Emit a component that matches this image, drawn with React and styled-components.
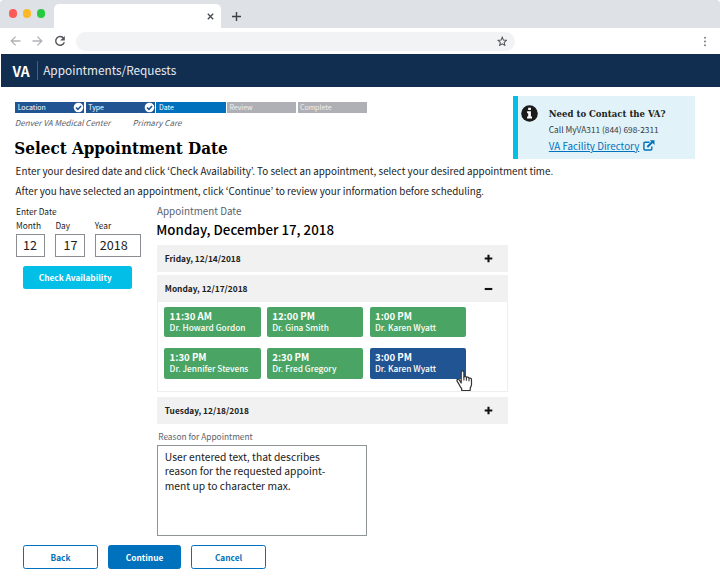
import React from 'react';
import styled, { createGlobalStyle } from 'styled-components';

const GlobalStyle = createGlobalStyle`
  *, *::before, *::after { box-sizing: border-box; }
  body {
    margin: 0;
    background: #fff;
    color: #323a45;
    font-family: "Noto Sans CJK JP", "Noto Sans", sans-serif;
    font-feature-settings: "pwid";
    overflow: hidden;
  }
`;

const serif = '"DejaVu Serif Condensed", "DejaVu Serif", serif';

const Window = styled.div`
  width: 720px;
  height: 576px;
  display: flex;
  flex-direction: column;
  overflow: hidden;
`;

/* Browser chrome */
const TabStrip = styled.div`
  height: 28px;
  flex: none;
  display: flex;
  align-items: flex-end;
  background: #dee1e6;
  border-radius: 4px 4px 0 0;
`;
const Lights = styled.div`
  width: 54px;
  height: 28px;
  display: flex;
  align-items: center;
  gap: 5.4px;
  padding: 0 0 1px 9px;
`;
const Light = styled.span`
  width: 8.4px;
  height: 8.4px;
  border-radius: 50%;
  background: ${(p) => p.$color};
`;
const Tab = styled.div`
  width: 167px;
  height: 24px;
  display: flex;
  align-items: center;
  justify-content: flex-end;
  padding: 0 7.5px 0 0;
  background: #fff;
  border-radius: 5px 5px 0 0;
`;
const NewTab = styled.div`
  height: 24px;
  display: flex;
  align-items: center;
  padding-left: 11px;
`;
const Toolbar = styled.div`
  height: 26px;
  flex: none;
  display: flex;
  align-items: center;
  padding: 0 12px 0 9.5px;
  background: #fff;
`;
const NavIcons = styled.div`
  display: flex;
  align-items: center;
  gap: 11.3px;
  width: 66px;
`;
const Address = styled.div`
  width: 439px;
  height: 19px;
  display: flex;
  align-items: center;
  justify-content: flex-end;
  padding-right: 7.5px;
  background: #f1f3f4;
  border-radius: 10px;
`;
const MenuDots = styled.div`
  margin-left: auto;
  display: flex;
`;

/* Application header */
const AppBar = styled.header`
  height: 33px;
  flex: none;
  margin-left: 1px;
  display: flex;
  align-items: center;
  padding-left: 11.5px;
  background: #112e51;
  color: #fff;
`;
const Brand = styled.span`
  width: 24px;
  font-size: 13.9px;
  font-weight: 700;
  line-height: 20px;
`;
const AppTitle = styled.span`
  height: 19px;
  padding-left: 5.7px;
  border-left: 1px solid #48607c;
  color: #e8ebef;
  font-size: 11.8px;
  line-height: 18px;
`;

/* Page heading area */
const Top = styled.section`
  height: 73.7px;
  flex: none;
  display: flex;
  justify-content: space-between;
  padding: 9px 25px 0 15.3px;
`;
const Heading = styled.div`
  display: flex;
  flex-direction: column;
  padding-top: 5.7px;
`;
const Steps = styled.ol`
  display: flex;
  gap: 1.5px;
  margin: 0;
  padding: 0;
  list-style: none;
`;
const Step = styled.li`
  width: 69.1px;
  height: 11px;
  display: flex;
  align-items: center;
  justify-content: space-between;
  padding: 0 0 0 2.4px;
  background: ${(p) => ({ done: '#205493', current: '#0071bc', todo: '#aeb0b5' }[p.$state])};
  color: ${(p) => (p.$state === 'todo' ? '#f1f1f1' : '#fff')};
  font-size: 6.95px;
  line-height: 11px;
`;
const Choices = styled.div`
  display: grid;
  grid-template-columns: 117.7px auto;
  margin: 3.6px 0 0 -0.5px;
  color: #5b616b;
  font-size: 8.05px;
  font-style: italic;
  line-height: 14px;
`;
const Title = styled.h1`
  margin: 6px 0 0 -1px;
  color: #000;
  font: 700 16.9px/24px ${serif};
  white-space: nowrap;
`;
const Contact = styled.aside`
  width: 182px;
  height: 63px;
  display: flex;
  align-items: flex-start;
  background: #e1f3f8;
  border-left: 5px solid #02bfe7;
`;
const InfoIcon = styled.svg`
  flex: none;
  margin: 9px 10.5px 0 3.3px;
`;
const ContactBody = styled.div`
  display: flex;
  flex-direction: column;
  padding-top: 8.8px;
  white-space: nowrap;
`;
const ContactTitle = styled.h2`
  margin: 0;
  color: #212121;
  font: 700 9.5px/17px ${serif};
`;
const Phone = styled.span`
  color: #323a45;
  font-size: 8.35px;
  line-height: 15.5px;
`;
const DirectoryLink = styled.a`
  display: flex;
  align-items: center;
  gap: 4px;
  margin-top: 0.6px;
  color: #0071bc;
  font-size: 9.8px;
  line-height: 16px;
  text-decoration: none;
`;
const LinkText = styled.span`
  text-decoration: underline;
  text-underline-offset: 1px;
  text-decoration-thickness: 1px;
`;

const Intro = styled.section`
  padding-left: 15.6px;
`;
const Paragraph = styled.p`
  margin: 0;
  color: #212121;
  font-size: 9.84px;
  line-height: 20px;
  white-space: nowrap;
`;

/* Form */
const Columns = styled.main`
  display: grid;
  grid-template-columns: 141px 351px;
  padding: 3px 0 0 16px;
`;
const DateForm = styled.form`
  padding-top: 0.2px;
`;
const Legend = styled.div`
  color: #212121;
  font-size: 8.3px;
  line-height: 14px;
`;
const Fields = styled.div`
  display: flex;
  gap: 10px;
`;
const Field = styled.label`
  width: ${(p) => p.$width}px;
  color: #212121;
  font-size: 8.3px;
  line-height: 14px;
`;
const FieldBox = styled.div`
  height: 23px;
  margin-top: 2px;
  padding-left: ${(p) => p.$inset}px;
  border: 1px solid #8a8d92;
  font-size: 12.6px;
  line-height: 20.5px;
`;
const CheckButton = styled.button`
  width: 109px;
  height: 23px;
  display: block;
  margin: 9px 0 0 6.7px;
  padding: 0 4px 0 0;
  border: 0;
  border-radius: 2.5px;
  background: #02bfe7;
  color: #fff;
  font-family: inherit;
  font-size: 8.32px;
  font-weight: 700;
  line-height: 23px;
`;
const Schedule = styled.section`
  display: flex;
  flex-direction: column;
`;
const Caption = styled.div`
  color: #5b616b;
  font-size: 9.87px;
  line-height: 14px;
`;
const SelectedDate = styled.h3`
  margin: 2px 0 5.3px -0.7px;
  color: #000;
  font-size: 13.34px;
  font-weight: 500;
  line-height: 20px;
`;
const Accordion = styled.div`
  display: flex;
  flex-direction: column;
  margin-left: 0.4px;
`;
const DayRow = styled.div`
  height: 26.6px;
  display: flex;
  align-items: center;
  justify-content: space-between;
  margin-top: ${(p) => p.$gap || 0}px;
  padding: 0 15px 1.5px 7.4px;
  background: #f1f1f1;
  color: #212121;
  font-size: 8.36px;
  font-weight: 700;
  line-height: 14px;
`;
const ToggleIcon = styled.svg`
  margin-top: 1.5px;
`;
const SlotPanel = styled.div`
  height: 90.6px;
  display: grid;
  grid-template-columns: repeat(3, 96.2px);
  grid-auto-rows: 30.5px;
  gap: 10.6px 6.5px;
  padding: 5.3px 0 0 6px;
  border: 1px solid #eeeeee;
  border-top: 0;
`;
const Slot = styled.div`
  position: relative;
  padding: 4px 0 0 5.2px;
  border-radius: 2px;
  background: ${(p) => (p.$selected ? '#205493' : '#4aa564')};
  color: #fff;
  white-space: nowrap;
`;
const SlotTime = styled.div`
  font-size: 9.65px;
  font-weight: 700;
  line-height: 11.3px;
`;
const SlotDoctor = styled.div`
  margin-top: -0.7px;
  font-size: 8.32px;
  font-weight: 500;
  line-height: 11px;
`;
const Pointer = styled.svg`
  position: absolute;
  left: 85.9px;
  top: 22.2px;
`;
const ReasonLabel = styled.label`
  margin: 4.8px 0 2px 1.2px;
  color: #5b616b;
  font-size: 8.33px;
  line-height: 14px;
`;
const ReasonBox = styled.div`
  width: 209.4px;
  height: 91px;
  margin-left: 0.4px;
  padding: 4.4px 6.4px;
  border: 1px solid #8f9496;
  color: #212121;
  font-size: 10.3px;
  line-height: 14.33px;
  white-space: pre;
`;
const Actions = styled.footer`
  display: flex;
  gap: 10px;
  padding: 9.6px 0 0 23.3px;
`;
const ActionButton = styled.button`
  width: ${(p) => (p.$primary ? 73.5 : 74.5)}px;
  height: 24px;
  padding: 0 0 1px;
  border: 1.4px solid #0071bc;
  border-radius: 2.5px;
  background: ${(p) => (p.$primary ? '#0071bc' : '#fff')};
  color: ${(p) => (p.$primary ? '#fff' : '#0071bc')};
  font-family: inherit;
  font-size: 8.32px;
  font-weight: 700;
  line-height: 14px;
`;

const Arrow = ({ back }) => (
  <svg width="11" height="10" viewBox="0 0 11 10" fill="none" stroke="#b0b2b6" strokeWidth="1.3">
    {back ? <path d="M10.5 5H1.3M5.6 .6 1.2 5l4.4 4.4" /> : <path d="M.5 5h9.2M5.4.6 9.8 5 5.4 9.4" />}
  </svg>
);
const CheckMark = () => (
  <svg width="11" height="11" viewBox="0 0 11 11">
    <circle cx="5.5" cy="5.5" r="4.8" fill="#fff" />
    <path d="M3 5.5 4.9 7.4 8.1 4" fill="none" stroke="#205493" strokeWidth="1.6" />
  </svg>
);
const Toggle = ({ open }) => (
  <ToggleIcon width="9" height="9" viewBox="0 0 9 9" stroke="#111" strokeWidth="2.1">
    <path d={open ? 'M.7 5h7.6' : 'M.7 4.5h7.6M4.5.7v7.6'} />
  </ToggleIcon>
);

const steps = [
  ['Location', 'done'],
  ['Type', 'done'],
  ['Date', 'current'],
  ['Review', 'todo'],
  ['Complete', 'todo'],
];
const slots = [
  ['11:30 AM', 'Dr. Howard Gordon'],
  ['12:00 PM', 'Dr. Gina Smith'],
  ['1:00 PM', 'Dr. Karen Wyatt'],
  ['1:30 PM', 'Dr. Jennifer Stevens'],
  ['2:30 PM', 'Dr. Fred Gregory'],
  ['3:00 PM', 'Dr. Karen Wyatt', true],
];

export default function App() {
  return (
    <Window>
      <GlobalStyle />
      <TabStrip>
        <Lights>
          <Light $color="#fc5b57" />
          <Light $color="#fdb827" />
          <Light $color="#27c93f" />
        </Lights>
        <Tab>
          <svg width="7" height="7" viewBox="0 0 7 7" stroke="#45484c" strokeWidth="1.3">
            <path d="M.8.8l5.4 5.4M6.2.8.8 6.2" />
          </svg>
        </Tab>
        <NewTab>
          <svg width="9" height="9" viewBox="0 0 9 9" stroke="#3c4043" strokeWidth="1.4">
            <path d="M0 4.5h9M4.5 0v9" />
          </svg>
        </NewTab>
      </TabStrip>
      <Toolbar>
        <NavIcons>
          <Arrow back />
          <Arrow />
          <svg width="12" height="12" viewBox="0 0 12 12">
            <path d="M9.7 3.3A4.4 4.4 0 1 0 10.3 7.3" fill="none" stroke="#53565a" strokeWidth="1.4" />
            <path d="M10.8.9v4.7H6.1z" fill="#53565a" />
          </svg>
        </NavIcons>
        <Address>
          <svg width="10.5" height="10.5" viewBox="0 0 24 24" fill="none" stroke="#4d5054" strokeWidth="2.3">
            <path d="M12 2.8l2.7 6.5 7 .6-5.3 4.6 1.6 6.9-6-3.7-6 3.7 1.6-6.9L2.3 9.9l7-.6z" />
          </svg>
        </Address>
        <MenuDots>
          <svg width="6" height="11" viewBox="0 0 6 11" fill="#77797d">
            <circle cx="3" cy="1.8" r=".95" />
            <circle cx="3" cy="5.5" r=".95" />
            <circle cx="3" cy="9.2" r=".95" />
          </svg>
        </MenuDots>
      </Toolbar>
      <AppBar>
        <Brand>VA</Brand>
        <AppTitle>Appointments/Requests</AppTitle>
      </AppBar>

      <Top>
        <Heading>
          <Steps>
            {steps.map(([name, state]) => (
              <Step key={name} $state={state}>
                {name}
                {state === 'done' && <CheckMark />}
              </Step>
            ))}
          </Steps>
          <Choices>
            <span>Denver VA Medical Center</span>
            <span>Primary Care</span>
          </Choices>
          <Title>Select Appointment Date</Title>
        </Heading>
        <Contact>
          <InfoIcon width="17" height="17" viewBox="0 0 17 17">
            <circle cx="8.5" cy="8.5" r="8.3" fill="#1b1b1b" />
            <path d="M7.2 2.7h2.7V5H7.200zM6.100 6.300h3.800v5.300h1.100v1.900H6.100v-1.900h1.100V8.200H6.100z" fill="#fff" />
          </InfoIcon>
          <ContactBody>
            <ContactTitle>Need to Contact the VA?</ContactTitle>
            <Phone>Call MyVA311 (844) 698-2311</Phone>
            <DirectoryLink>
              <LinkText>VA Facility Directory</LinkText>
              <svg width="12" height="11" viewBox="0 0 12 11">
                <path d="M6.5 2.2H1.9a1 1 0 0 0-1 1V9a1 1 0 0 0 1 1h5.900a1 1 0 0 0 1-1V6.400" fill="none" stroke="#0071bc" strokeWidth="1.4" />
                <path d="M4.300 7 9.300 2" stroke="#0071bc" strokeWidth="1.9" />
                <path d="M6.800 .2h4.700v4.700z" fill="#0071bc" />
              </svg>
            </DirectoryLink>
          </ContactBody>
        </Contact>
      </Top>

      <Intro>
        <Paragraph>
          Enter your desired date and click ‘Check Availability’. To select an appointment, select your desired appointment time.
        </Paragraph>
        <Paragraph>
          After you have selected an appointment, click ‘Continue’ to review your information before scheduling.
        </Paragraph>
      </Intro>

      <Columns>
        <DateForm>
          <Legend>Enter Date</Legend>
          <Fields>
            <Field $width={29.4}>
              Month
              <FieldBox $inset={6}>12</FieldBox>
            </Field>
            <Field $width={29.4}>
              Day
              <FieldBox $inset={7}>17</FieldBox>
            </Field>
            <Field $width={45.8}>
              Year
              <FieldBox $inset={4}>2018</FieldBox>
            </Field>
          </Fields>
          <CheckButton type="button">Check Availability</CheckButton>
        </DateForm>
        <Schedule>
          <Caption>Appointment Date</Caption>
          <SelectedDate>Monday, December 17, 2018</SelectedDate>
          <Accordion>
            <DayRow>
              Friday, 12/14/2018
              <Toggle />
            </DayRow>
            <DayRow $gap={3.5}>
              Monday, 12/17/2018
              <Toggle open />
            </DayRow>
            <SlotPanel>
              {slots.map(([time, doctor, selected]) => (
                <Slot key={time} $selected={selected}>
                  <SlotTime>{time}</SlotTime>
                  <SlotDoctor>{doctor}</SlotDoctor>
                  {selected && (
                    <Pointer width="17" height="22" viewBox="0 0 17 22">
                      <path
                        d="M5.2 13V2.300C5.200.4 7.900.4 7.900 2.300v4.900c.3-1.200 2.500-1 2.500.5.500-1 2.600-.8 2.600.8.6-.8 2.500-.5 2.500 1.200v4.800c0 1.700-1.300 2.800-1.300 4v2H5.700v-1.800c-1.200-1.500-2-2.700-2.800-4.600L1 10.900c-.6-1.500 1.400-2.200 2.300-1z"
                        fill="#fff"
                        stroke="#333"
                        strokeWidth="1.2"
                        strokeLinejoin="round"
                      />
                      <path d="M7.900 7v3.500M10.400 7.700v3M13 8.500v2.700" fill="none" stroke="#333" strokeWidth="1.1" />
                    </Pointer>
                  )}
                </Slot>
              ))}
            </SlotPanel>
            <DayRow $gap={5}>
              Tuesday, 12/18/2018
              <Toggle />
            </DayRow>
          </Accordion>
          <ReasonLabel>Reason for Appointment</ReasonLabel>
          <ReasonBox>{'User entered text, that describes\nreason for the requested appoint-\nment up to character max.'}</ReasonBox>
        </Schedule>
      </Columns>

      <Actions>
        <ActionButton>Back</ActionButton>
        <ActionButton $primary>Continue</ActionButton>
        <ActionButton>Cancel</ActionButton>
      </Actions>
    </Window>
  );
}
